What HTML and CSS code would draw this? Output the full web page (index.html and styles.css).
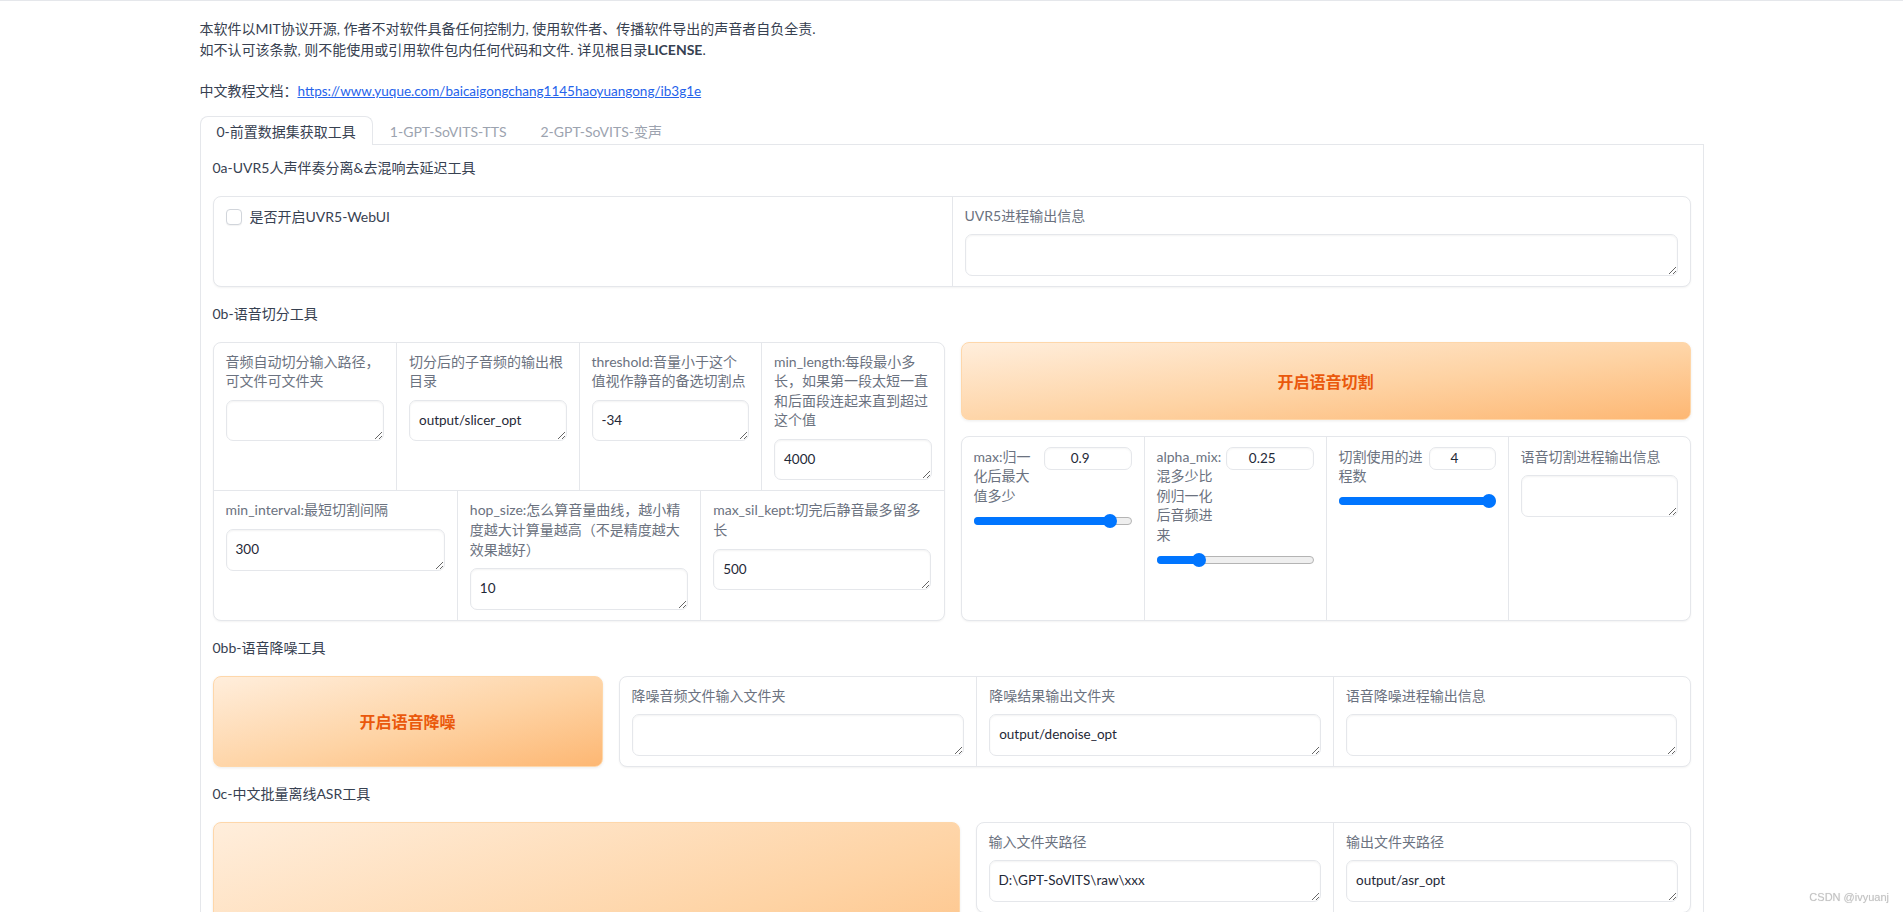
FILE: index.html
```html
<!DOCTYPE html>
<html lang="zh-CN">
<head>
<meta charset="utf-8">
<title>GPT-SoVITS WebUI</title>
<link rel="stylesheet" href="styles.css">
</head>
<body>
<div class="app">
  <div class="intro">
    <p>本软件以MIT协议开源, 作者不对软件具备任何控制力, 使用软件者、传播软件导出的声音者自负全责.<br>如不认可该条款, 则不能使用或引用软件包内任何代码和文件. 详见根目录<strong>LICENSE</strong>.</p>
    <p>中文教程文档：<a href="#">https://www.yuque.com/baicaigongchang1145haoyuangong/ib3g1e</a></p>
  </div>

  <div class="tab-nav">
    <button class="tab active">0-前置数据集获取工具</button>
    <button class="tab">1-GPT-SoVITS-TTS</button>
    <button class="tab">2-GPT-SoVITS-变声</button>
  </div>

  <div class="tab-panel">
    <div class="section-title">0a-UVR5人声伴奏分离&amp;去混响去延迟工具</div>
    <div class="box grid2">
      <div class="cell">
        <label class="check"><span class="checkbox"></span>是否开启UVR5-WebUI</label>
      </div>
      <div class="cell">
        <div class="label">UVR5进程输出信息</div>
        <textarea class="tb"></textarea>
      </div>
    </div>

    <div class="section-title">0b-语音切分工具</div>
    <div class="row">
      <div class="col box">
        <div class="grid4">
          <div class="cell">
            <div class="label">音频自动切分输入路径，可文件可文件夹</div>
            <textarea class="tb"></textarea>
          </div>
          <div class="cell">
            <div class="label">切分后的子音频的输出根目录</div>
            <textarea class="tb">output/slicer_opt</textarea>
          </div>
          <div class="cell">
            <div class="label">threshold:音量小于这个值视作静音的备选切割点</div>
            <textarea class="tb">-34</textarea>
          </div>
          <div class="cell">
            <div class="label">min_length:每段最小多长，如果第一段太短一直和后面段连起来直到超过这个值</div>
            <textarea class="tb">4000</textarea>
          </div>
        </div>
        <div class="grid3 row-sep">
          <div class="cell">
            <div class="label">min_interval:最短切割间隔</div>
            <textarea class="tb">300</textarea>
          </div>
          <div class="cell">
            <div class="label">hop_size:怎么算音量曲线，越小精度越大计算量越高（不是精度越大效果越好）</div>
            <textarea class="tb">10</textarea>
          </div>
          <div class="cell">
            <div class="label">max_sil_kept:切完后静音最多留多长</div>
            <textarea class="tb">500</textarea>
          </div>
        </div>
      </div>
      <div class="col stack">
        <button class="btn-primary btn-slice">开启语音切割</button>
        <div class="box grid4 fill">
          <div class="cell scell">
            <div class="sl-head">
              <div class="sl-label">max:归一化后最大值多少</div>
              <input class="num" type="text" value="0.9">
            </div>
            <div class="track" style="--v:0.9"><span class="fillbar"></span><span class="thumb"></span></div>
          </div>
          <div class="cell scell">
            <div class="sl-head">
              <div class="sl-label">alpha_mix:混多少比例归一化后音频进来</div>
              <input class="num" type="text" value="0.25">
            </div>
            <div class="track" style="--v:0.25"><span class="fillbar"></span><span class="thumb"></span></div>
          </div>
          <div class="cell scell">
            <div class="sl-head">
              <div class="sl-label">切割使用的进程数</div>
              <input class="num num-sm" type="text" value="4">
            </div>
            <div class="track" style="--v:1"><span class="fillbar"></span><span class="thumb"></span></div>
          </div>
          <div class="cell scell">
            <div class="label">语音切割进程输出信息</div>
            <textarea class="tb"></textarea>
          </div>
        </div>
      </div>
    </div>

    <div class="section-title">0bb-语音降噪工具</div>
    <div class="row">
      <button class="btn-primary btn-denoise">开启语音降噪</button>
      <div class="box grid3 fill-x">
        <div class="cell">
          <div class="label">降噪音频文件输入文件夹</div>
          <textarea class="tb"></textarea>
        </div>
        <div class="cell">
          <div class="label">降噪结果输出文件夹</div>
          <textarea class="tb">output/denoise_opt</textarea>
        </div>
        <div class="cell">
          <div class="label">语音降噪进程输出信息</div>
          <textarea class="tb"></textarea>
        </div>
      </div>
    </div>

    <div class="section-title">0c-中文批量离线ASR工具</div>
    <div class="row row-asr">
      <button class="btn-primary btn-asr">开启离线批量ASR</button>
      <div class="box grid2 fill-x asr-box">
        <div class="cell">
          <div class="label">输入文件夹路径</div>
          <textarea class="tb">D:\GPT-SoVITS\raw\xxx</textarea>
        </div>
        <div class="cell">
          <div class="label">输出文件夹路径</div>
          <textarea class="tb">output/asr_opt</textarea>
        </div>
      </div>
    </div>
  </div>
</div>
<div class="watermark">CSDN @ivyuanj</div>
</body>
</html>
```

FILE: styles.css
```css
html, body {
  margin: 0;
  padding: 0;
  overflow: hidden;
  background: #ffffff;
}

body {
  font-family: Lato, "Noto Sans CJK SC", sans-serif;
  font-size: 14px;
  color: #374151;
  border-top: 1px solid #e5e7eb;
}

.app {
  width: 1504px;
  margin: 0 auto;
  padding-top: 17px;
}

.intro p {
  margin: 0 0 20px;
  line-height: 21px;
}

.intro p:last-child {
  margin-bottom: 14px;
}

.intro strong {
  font-weight: 700;
}

.intro a {
  color: #2563eb;
  text-decoration: underline;
  font-size: 13.5px;
}

/* tabs */
.tab-nav {
  display: flex;
  border-bottom: 1px solid #e5e7eb;
}

.tab {
  font: inherit;
  line-height: 20px;
  background: none;
  border: 1px solid transparent;
  border-bottom: none;
  border-radius: 8px 8px 0 0;
  padding: 5px 16px 3px;
  margin-bottom: -1px;
  color: #9ca3af;
  cursor: pointer;
}

.tab.active {
  border-color: #e5e7eb;
  background: #ffffff;
  color: #374151;
}

.tab-panel {
  border: 1px solid #e5e7eb;
  border-top: none;
  padding: 13px 12px 12px;
  display: flex;
  flex-direction: column;
  gap: 17.5px;
}

.section-title {
  line-height: 20px;
  color: #374151;
}

/* blocks */
.box {
  border: 1px solid #e5e7eb;
  border-radius: 8px;
  background: #ffffff;
  box-shadow: 0 1px 2px rgba(0, 0, 0, 0.05);
  overflow: hidden;
}

.grid2 {
  display: grid;
  grid-template-columns: 1fr 1fr;
}

.grid3 {
  display: grid;
  grid-template-columns: repeat(3, 1fr);
}

.grid4 {
  display: grid;
  grid-template-columns: repeat(4, 1fr);
}

.row-sep {
  border-top: 1px solid #e5e7eb;
}

.cell {
  padding: 9px 12px 10px;
  border-left: 1px solid #e5e7eb;
  min-width: 0;
}

.cell:first-child {
  border-left: none;
}

.label {
  line-height: 19.6px;
  color: #6b7280;
  margin-bottom: 9px;
}

.tb {
  display: block;
  width: 100%;
  box-sizing: border-box;
  height: 41.5px;
  border: 1px solid #e5e7eb;
  border-radius: 7px;
  padding: 9px 9px;
  font-family: inherit;
  font-size: 13.5px;
  line-height: 20px;
  color: #1f2937;
  background: #ffffff;
  resize: vertical;
  overflow: hidden;
  outline: none;
  box-shadow: inset 0 1px 2px rgba(0, 0, 0, 0.05);
}

/* checkbox */
.check {
  display: flex;
  align-items: center;
  gap: 8px;
  line-height: 20px;
  margin-top: 1px;
  color: #374151;
}

.checkbox {
  width: 16px;
  height: 16px;
  box-sizing: border-box;
  border: 1px solid #d1d5db;
  border-radius: 4px;
  background: #ffffff;
  box-shadow: 0 1px 1px rgba(0, 0, 0, 0.05);
}

/* rows */
.row {
  display: flex;
  gap: 16px;
  align-items: stretch;
}

.col {
  flex: 1 1 0;
  min-width: 0;
}

.stack {
  display: flex;
  flex-direction: column;
  gap: 16px;
}

.fill {
  flex: 1 1 auto;
}

.fill-x {
  flex: 1 1 0;
  min-width: 0;
}

/* buttons */
.btn-primary {
  font-family: inherit;
  font-size: 16px;
  font-weight: 600;
  color: #ea580c;
  border: 1px solid #fed7aa;
  border-radius: 8px;
  background: linear-gradient(to bottom right, #ffeedc 0%, #fed3a4 55%, #fdb773 100%);
  box-shadow: 0 1px 3px rgba(0, 0, 0, 0.08);
  display: flex;
  align-items: center;
  justify-content: center;
  cursor: pointer;
}

.btn-slice {
  height: 78px;
  flex: 0 0 auto;
}

.btn-denoise {
  flex: 0 0 390px;
}

.btn-asr {
  flex: 0 0 747px;
  height: 230px;
}

.asr-box {
  align-self: flex-start;
}

/* sliders */
.scell {
  padding-top: 10px;
}

.sl-head {
  display: flex;
  align-items: flex-start;
  gap: 2px;
}

.sl-label {
  flex: 1 1 auto;
  min-width: 0;
  line-height: 19.6px;
  color: #6b7280;
}

.num {
  flex: 0 0 87.6px;
  width: 87.6px;
  height: 23.4px;
  box-sizing: border-box;
  border: 1px solid #e5e7eb;
  border-radius: 7px;
  padding: 0 15px 0 0;
  font-family: inherit;
  font-size: 13.5px;
  text-align: center;
  color: #1f2937;
  outline: none;
  box-shadow: inset 0 1px 2px rgba(0, 0, 0, 0.04);
}

.num-sm {
  flex: 0 0 67px;
  width: 67px;
}

.track {
  position: relative;
  height: 8px;
  margin-top: 11.5px;
  box-sizing: border-box;
  border: 1px solid #b4b4b4;
  border-radius: 4px;
  background: #efefef;
}

.fillbar {
  position: absolute;
  left: -1px;
  top: -1px;
  height: 8px;
  width: calc(var(--v) * (100% - 12px) + 7px);
  border-radius: 4px;
  background: #0075ff;
}

.thumb {
  position: absolute;
  top: -4px;
  left: calc(var(--v) * (100% - 12px) - 1px);
  width: 14px;
  height: 14px;
  border-radius: 50%;
  background: #0075ff;
}

.watermark {
  position: fixed;
  right: 14px;
  bottom: 9px;
  font-family: "Liberation Sans", sans-serif;
  font-size: 11px;
  color: #c4c4c4;
  text-shadow: 0 0 1px rgba(0, 0, 0, 0.15);
}
```
